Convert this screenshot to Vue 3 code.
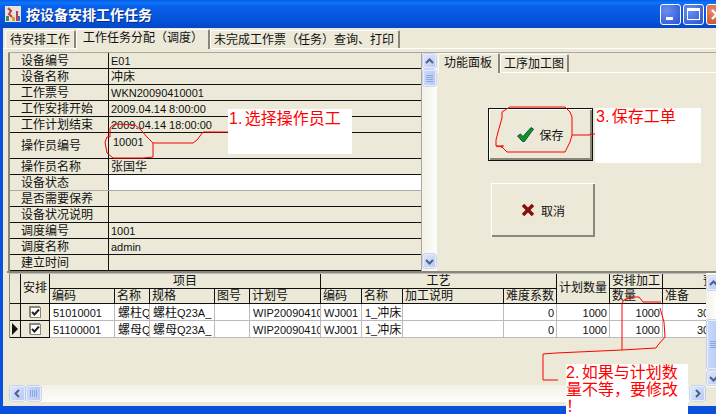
<script setup>
const infoRows = [
  { label: '设备编号', value: 'E01', h: 16 },
  { label: '设备名称', value: '冲床', h: 16 },
  { label: '工作票号', value: 'WKN20090410001', h: 16 },
  { label: '工作安排开始', value: '2009.04.14 8:00:00', h: 16 },
  { label: '工作计划结束', value: '2009.04.14 18:00:00', h: 16 },
  { label: '操作员编号', value: '10001', h: 26, top: true },
  { label: '操作员名称', value: '张国华', h: 16 },
  { label: '设备状态', value: '', h: 16, white: true },
  { label: '是否需要保养', value: '', h: 16 },
  { label: '设备状况说明', value: '', h: 16 },
  { label: '调度编号', value: '1001', h: 16 },
  { label: '调度名称', value: 'admin', h: 16 },
  { label: '建立时间', value: '', h: 16 }
]
const dataRows = [
  { mark: false, cells: ['51010001', '螺柱Q', '螺柱Q23A_', '', 'WIP20090410', 'WJ001', '1_冲床工序', '', '0', '1000', '1000', '30'] },
  { mark: true, cells: ['51100001', '螺母Q', '螺母Q23A_', '', 'WIP20090410', 'WJ001', '1_冲床工序', '', '0', '1000', '1000', '30'] }
]
const subHeads = ['编码', '名称', '规格', '图号', '计划号', '编码', '名称', '加工说明', '难度系数']
const rightAligned = [8, 9, 10]

// Latin runs are 11px and CJK runs 12px, as in the bitmap fonts of the original.
function segments(text) {
  return (text.match(/[\u0000-\u007f]+|[^\u0000-\u007f]+/g) || []).map((t) => ({
    t,
    cjk: t.charCodeAt(0) > 127
  }))
}
</script>

<template>
  <div class="window">
    <header class="titlebar">
      <svg class="appicon" width="16" height="16" viewBox="0 0 16 16">
        <rect width="16" height="16" fill="#e8e4d8" />
        <rect x="1" y="10" width="3" height="5" fill="#3a8a5a" />
        <path d="M3 2l3 3-2 3 3 3" stroke="#c83a4a" stroke-width="2" fill="none" />
        <rect x="7" y="11" width="3" height="4" fill="#d8a030" />
        <rect x="11" y="5" width="2" height="10" fill="#b04060" />
        <rect x="13" y="10" width="2" height="5" fill="#4a6ab0" />
      </svg>
      <span class="title">按设备安排工作任务</span>
      <div class="winbtns">
        <span class="winbtn"><i class="min"></i></span>
        <span class="winbtn"><i class="max"></i></span>
        <span class="winbtn close">
          <svg width="19" height="19" viewBox="0 0 19 19"><path d="M5 5l9 9M14 5l-9 9" stroke="#fff" stroke-width="2.4" /></svg>
        </span>
      </div>
    </header>

    <div class="client">
      <nav class="tabs outer">
        <span class="tab">待安排工作</span>
        <span class="tab active">工作任务分配（调度）</span>
        <span class="tab">未完成工作票（任务）查询、打印</span>
      </nav>

      <section class="upper">
        <div class="info">
          <div
            v-for="row in infoRows"
            :key="row.label"
            class="info-row"
            :style="{ height: row.h + 'px' }"
          >
            <div class="info-label">{{ row.label }}</div>
            <div class="info-value" :class="{ white: row.white, top: row.top }">
              <span v-for="(s, k) in segments(row.value)" :key="k" :class="{ cjk: s.cjk }">{{ s.t }}</span>
            </div>
          </div>
        </div>

        <div class="vscroll">
          <span class="sbtn"><svg width="11" height="11" viewBox="0 0 11 11"><path d="M2 7l3.500-3.500L9 7" fill="none" stroke="#4d6185" stroke-width="2" /></svg></span>
          <span class="sthumb small"><i></i><i></i><i></i><i></i></span>
          <span class="spacer"></span>
          <span class="sbtn"><svg width="11" height="11" viewBox="0 0 11 11"><path d="M2 4l3.500 3.500L9 4" fill="none" stroke="#4d6185" stroke-width="2" /></svg></span>
        </div>

        <div class="panel">
          <nav class="tabs inner">
            <span class="tab active">功能面板</span>
            <span class="tab">工序加工图</span>
          </nav>
          <div class="actions">
            <button class="btn default">
              <svg width="17" height="15" viewBox="0 0 17 15"><path d="M0.500 9l3-2 2.500 2.500L14 0.500l2.500 1.500-9 12.500h-2z" fill="#0a9a10" stroke="#06246e" stroke-width=".8" /></svg>
              <span>保存</span>
            </button>
            <button class="btn cancel">
              <svg width="14" height="14" viewBox="0 0 14 14"><path d="M2 2l10 10M12 2L2 12" stroke="#8a0c0c" stroke-width="3.400" /></svg>
              <span>取消</span>
            </button>
          </div>
        </div>
      </section>

      <section class="lower">
        <div class="grid">
          <div class="gh" style="grid-row: 1 / 3"></div>
          <div class="gh two" style="grid-row: 1 / 3">安排</div>
          <div class="gh center" style="grid-column: 3 / 8">项目</div>
          <div class="gh center" style="grid-column: 8 / 12">工艺</div>
          <div class="gh two" style="grid-row: 1 / 3; grid-column: 12">计划数量</div>
          <div class="gh center" style="grid-column: 13">安排加工</div>
          <div class="gh clip" style="grid-column: 14"><span>预计工时</span></div>
          <div v-for="(s, i) in subHeads" :key="i" class="gh sub" :style="{ gridRow: 2, gridColumn: i + 3 }">{{ s }}</div>
          <div class="gh sub" style="grid-row: 2; grid-column: 13">数量</div>
          <div class="gh sub" style="grid-row: 2; grid-column: 14">准备</div>

          <template v-for="(row, r) in dataRows" :key="r">
            <div class="gh ind"><i v-if="row.mark" class="arrow"></i></div>
            <div class="gh chk"><span class="check"><svg width="9" height="9" viewBox="0 0 9 9"><path d="M1 4l2.500 2.500L8 1.500" fill="none" stroke="#222" stroke-width="2" /></svg></span></div>
            <div
              v-for="(c, i) in row.cells"
              :key="i"
              class="gc"
              :class="{ right: rightAligned.includes(i), clipnum: i === 11 }"
            ><span v-for="(s, k) in segments(c)" :key="k" :class="{ cjk: s.cjk }">{{ s.t }}</span></div>
          </template>
        </div>

        <div class="grid-vscroll">
          <span class="sbtn"><svg width="11" height="11" viewBox="0 0 11 11"><path d="M2 7l3.500-3.500L9 7" fill="none" stroke="#4d6185" stroke-width="2" /></svg></span>
          <span class="spacer s1"></span>
          <span class="sthumb tall"><i></i><i></i><i></i><i></i></span>
          <span class="sbtn gap"><svg width="11" height="11" viewBox="0 0 11 11"><path d="M2 4l3.500 3.500L9 4" fill="none" stroke="#4d6185" stroke-width="2" /></svg></span>
        </div>

        <div class="hscroll">
          <span class="sbtn"><svg width="11" height="11" viewBox="0 0 11 11"><path d="M7 2L3.500 5.500 7 9" fill="none" stroke="#4d6185" stroke-width="2" /></svg></span>
          <span class="sthumb horiz"><i></i><i></i><i></i><i></i></span>
          <span class="spacer"></span>
          <span class="sbtn"><svg width="11" height="11" viewBox="0 0 11 11"><path d="M4 2l3.500 3.500L4 9" fill="none" stroke="#4d6185" stroke-width="2" /></svg></span>
        </div>
      </section>
    </div>

    <div class="note n1">1. 选择操作员工</div>
    <div class="note n3">3. 保存工单</div>
    <div class="note n2">2. 如果与计划数量不等，要修改！</div>

    <svg class="ink" width="716" height="414" viewBox="0 0 716 414">
      <g fill="none" stroke="#f00" stroke-width="1">
        <path d="M110 137V128L113 125L115 124L135 125L141 130L147 137L153 143V157L143 158H113L107 153L105 142L107 137Z" />
        <path d="M153 143H193L197 140L203 132H228" />
        <path d="M510 107H565L570 112L572 117V135L570 142L565 152H507L502 147L496 146V140L498 132L502 118V112L505 110Z" />
        <path d="M496 146H504M502 145V148" />
        <path d="M572 135H590V134H595" />
        <path d="M661 302H643L639 297H633L624 300L622 303V350L556 353L543 354V380H558" />
        <path d="M660 308L664 322L665 337L658 345L656 348L622 350" />
      </g>
    </svg>
  </div>
</template>

<style>
html, body { margin: 0; padding: 0; background: #0a55e0; }
</style>

<style scoped>
.window {
  position: relative;
  width: 716px;
  height: 414px;
  overflow: hidden;
  display: flex;
  flex-direction: column;
  background: #0a50dc;
  font: 12px "Liberation Sans", "Noto Sans CJK SC", sans-serif;
  color: #111;
}
.titlebar {
  height: 28px;
  flex: none;
  display: flex;
  align-items: center;
  padding-left: 5px;
  box-sizing: border-box;
  background: linear-gradient(#0a5ae8 0, #0a78f8 3px, #0a60ea 6px, #0453dc 20px, #0348c8 28px);
}
.appicon { flex: none; }
.title {
  margin-left: 5px;
  color: #fff;
  font-size: 14px;
  font-weight: 700;
  text-shadow: 1px 1px 0 #0a2a80;
}
.winbtns {
  margin-left: auto;
  display: flex;
  gap: 2px;
  margin-right: -11px;
}
.winbtn {
  width: 19px;
  height: 19px;
  border: 1px solid #fff;
  border-radius: 3px;
  background: radial-gradient(circle at 30% 30%, #6a90f0, #2a50d8);
  display: flex;
  align-items: center;
  justify-content: center;
  position: relative;
}
.winbtn .min { position: absolute; left: 5px; bottom: 4px; width: 7px; height: 3px; background: #fff; }
.winbtn .max { width: 11px; height: 8px; border: 1px solid #fff; border-top-width: 3px; }
.winbtn.close { background: radial-gradient(circle at 30% 30%, #e88a6a, #c8401a); }

.client {
  flex: 1;
  margin: 0 0 8px 3px;
  padding-top: 1px;
  background: #ece9d8;
  display: flex;
  flex-direction: column;
  min-height: 0;
}
.tabs { display: flex; align-items: flex-end; flex: none; }
.tabs.outer { height: 19px; padding-left: 2px; border-bottom: 1px solid #fff; margin-bottom: 3px; }
.tab {
  box-sizing: border-box;
  height: 18px;
  line-height: 18px;
  padding: 0 5px;
  white-space: nowrap;
  border-top: 1px solid #fff;
  border-left: 1px solid #fff;
  border-right: 2px solid #8a8778;
  border-radius: 2px 2px 0 0;
}
.tab.active { height: 20px; line-height: 17px; padding: 0 7px 3px; position: relative; margin-bottom: -1px; background: #ece9d8; }
.outer .tab:nth-child(1) { width: 71px; padding: 0 0 0 4px; }
.outer .tab:nth-child(2) { width: 134px; padding-left: 6px; }
.outer .tab:nth-child(3) { width: 190px; padding-left: 3px; }

.upper {
  height: 218px;
  flex: none;
  display: flex;
  border-top: 1px solid #aca899;
  margin-left: 5px;
}
.info {
  width: 411px;
  flex: none;
  border-left: 2px solid #8a8778;
  overflow: hidden;
}
.info-row {
  box-sizing: border-box;
  display: flex;
  border-bottom: 1px solid #111;
  line-height: 15px;
  font-size: 11px;
}
.info-row:nth-child(8) { border-bottom-color: #aaa; }
.info-label {
  width: 99px;
  flex: none;
  box-sizing: border-box;
  padding: 1px 0 0 11px;
  border-right: 1px solid #111;
  display: flex;
  align-items: center;
  font-size: 12px;
}
.info-value {
  flex: 1;
  padding: 1px 0 0 2px;
  white-space: nowrap;
}
.info-value.top { line-height: 17px; padding-left: 4px; }
.info-value.white { background: #fff; }
.cjk { font-size: 12px; }

.vscroll {
  width: 15px;
  flex: none;
  display: flex;
  flex-direction: column;
  align-items: center;
  padding: 1px 0 3px;
  gap: 2px;
  background: linear-gradient(90deg, #f3f1e8, #fdfdfb);
  border-left: 1px solid #aca899;
  box-sizing: content-box;
  height: 214px;
}
.sbtn {
  width: 13px;
  height: 14px;
  flex: none;
  background: linear-gradient(135deg, #dce6fd, #b8caf6);
  border: 1px solid #e6edfc;
  box-sizing: border-box;
  border-radius: 2px;
  display: flex;
  align-items: center;
  justify-content: center;
  box-shadow: 0 0 0 .5px #9db4e6;
}
.sthumb {
  flex: none;
  box-sizing: border-box;
  background: linear-gradient(90deg, #c9d7fa, #b8caf6);
  border: 1px solid #e6edfc;
  border-radius: 2px;
  display: flex;
  flex-direction: column;
  align-items: center;
  justify-content: center;
  gap: 1px;
  box-shadow: 0 0 0 .5px #9db4e6;
}
.sthumb i { display: block; width: 7px; height: 1px; background: #8fa6dc; }
.sthumb.small { width: 13px; height: 16px; }
.sthumb.tall { width: 13px; height: 49px; }
.sthumb.horiz { width: 15px; height: 15px; flex-direction: row; }
.sthumb.horiz i { width: 1px; height: 7px; }
.spacer { flex: 1; }

.panel {
  flex: 1;
  min-width: 0;
}
.tabs.inner { height: 19px; padding-left: 1px; border-bottom: 1px solid #fff; }
.tabs.inner .tab { height: 18px; width: 69px; line-height: 19px; padding: 0 0 0 3px; }
.tabs.inner .tab.active { height: 20px; width: 62px; line-height: 18px; padding: 0 0 2px 5px; }
.actions {
  display: flex;
  flex-direction: column;
  align-items: flex-start;
  padding: 35px 0 0 51px;
}
.btn {
  display: flex;
  align-items: center;
  justify-content: center;
  gap: 5px;
  box-sizing: border-box;
  padding: 0;
  font: inherit;
  color: #111;
  background: #ece9d8;
  border: 0;
  box-shadow: inset 1px 1px 0 #fff, inset -2px -2px 0 #8a8778;
}
.btn.default {
  width: 105px;
  height: 53px;
  border: 1px solid #111;
}
.btn.cancel { width: 104px; height: 54px; margin: 22px 0 0 3px; gap: 6px; }

.lower {
  flex: 1;
  position: relative;
  margin-left: 4px;
  border-top: 2px solid #8a8778;
  min-height: 0;
  background: #ece9d8;
}
.grid {
  position: absolute;
  left: 2px;
  top: 0;
  width: 697px;
  box-sizing: border-box;
  overflow: hidden;
  display: grid;
  grid-template-columns: 11px 29px 65px 35px 65px 35px 71px 41px 41px 101px 53px 53px 53px 60px;
  grid-template-rows: 15px 15px 17px 17px;
  border-top: 1px solid #bbb;
  border-left: 1px solid #8a8778;
}
.gh {
  box-sizing: border-box;
  border-right: 1px solid #111;
  border-bottom: 1px solid #111;
  background: #ece9d8;
  white-space: nowrap;
  overflow: hidden;
  line-height: 14px;
  padding-left: 2px;
  display: block;
}
.center { text-align: center; padding-left: 0; }
.two { display: flex; align-items: center; padding-left: 2px; padding-bottom: 1px; }
.sub { line-height: 15px; }
.clip { position: relative; }
.clip span { position: absolute; left: 40px; top: 0; }
.ind { padding: 0; display: flex; align-items: center; position: relative; }
.arrow { width: 0; height: 0; border-left: 6px solid #111; border-top: 6px solid transparent; border-bottom: 6px solid transparent; margin-left: 2px; }
.chk { padding: 0; display: flex; align-items: center; justify-content: center; }
.check {
  width: 11px;
  height: 11px;
  box-sizing: border-box;
  background: #fff;
  border: 1px solid #8a8778;
  box-shadow: -1px -1px 0 #8a8778;
  display: flex;
  align-items: center;
  justify-content: center;
}
.gc {
  box-sizing: border-box;
  background: #fff;
  border-right: 1px solid #bbb;
  border-bottom: 1px solid #bbb;
  padding: 2px 2px 0 3px;
  font-size: 11px;
  line-height: 14px;
  white-space: nowrap;
  overflow: hidden;
}
.gc.right { text-align: right; }
.gc.clipnum { padding-left: 34px; }

.grid-vscroll {
  position: absolute;
  right: 0;
  top: 0;
  width: 10px;
  padding-top: 3px;
  padding-left: 1px;
  box-sizing: border-box;
  height: 114px;
  display: flex;
  flex-direction: column;
  align-items: flex-start;
  overflow: hidden;
  background: linear-gradient(90deg, #f3f1e8, #fdfdfb);
}
.spacer.s1 { flex: none; height: 30px; }
.sbtn.gap { margin-top: 2px; }
.hscroll {
  position: absolute;
  left: 3px;
  right: 11px;
  bottom: 4px;
  height: 17px;
  display: flex;
  align-items: center;
  gap: 1px;
  background: linear-gradient(#f3f1e8, #fdfdfb);
}
.hscroll .sbtn { width: 15px; height: 15px; }

.note {
  position: absolute;
  background: #fff;
  color: #f00;
  font-size: 16px;
  line-height: 17px;
  word-spacing: -2px;
  box-sizing: border-box;
}
.n1 { left: 228px; top: 109px; width: 124px; height: 45px; padding-left: 1px; line-height: 19px; }
.n3 { left: 595px; top: 108px; width: 106px; height: 55px; padding-left: 1px; }
.n2 { left: 566px; top: 364px; width: 122px; height: 50px; padding-left: 0; line-break: anywhere; word-break: break-all; }
.ink { position: absolute; left: 0; top: 0; pointer-events: none; }
</style>
